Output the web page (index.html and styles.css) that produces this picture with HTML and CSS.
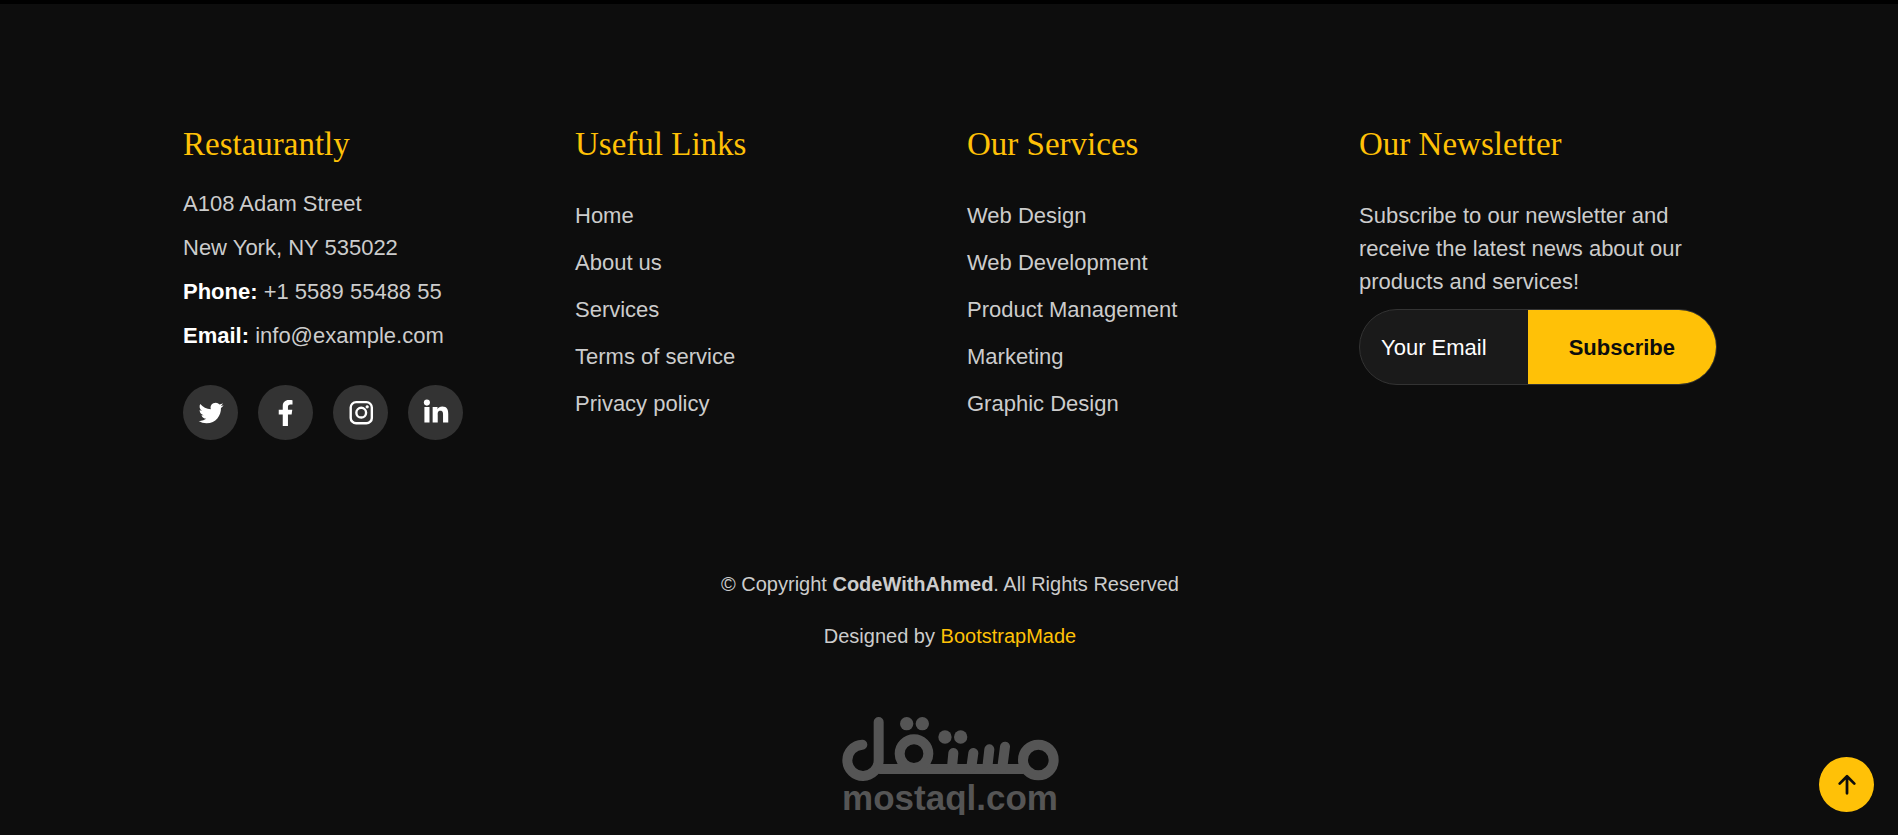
FILE: index.html
```html
<!DOCTYPE html>
<html lang="en">
<head>
    <meta charset="UTF-8">
    <meta name="viewport" content="width=device-width, initial-scale=1.0">
    <title>Restaurantly</title>
    <link rel="stylesheet" href="styles.css">
</head>
<body>

    <footer id="footer">
        <div class="container footer-top">
            <div class="footer-col">
                <h3>Restaurantly</h3>
                <address>
                    A108 Adam Street<br>
                    New York, NY 535022<br>
                    <strong>Phone:</strong> +1 5589 55488 55<br>
                    <strong>Email:</strong> info@example.com
                </address>
                <div class="social-links">
                    <a href="#" aria-label="Twitter">
                        <svg viewBox="0 0 24 24"><path d="M23.6 4.9c-.8.4-1.7.6-2.7.8 1-.6 1.7-1.5 2-2.6-.9.5-1.9.9-3 1.1a4.7 4.7 0 0 0-8.1 4.300C7.900 8.300 4.400 6.400 2.100 3.600a4.700 4.700 0 0 0 1.500 6.300c-.8 0-1.500-.2-2.100-.6v.1c0 2.300 1.600 4.200 3.800 4.600-.7.2-1.400.2-2.100.1.600 1.900 2.300 3.200 4.400 3.300A9.500 9.500 0 0 1 .6 19.300a13.400 13.400 0 0 0 7.300 2.100c8.700 0 13.500-7.200 13.300-14.100 1-.6 1.800-1.500 2.400-2.400z"/></svg>
                    </a>
                    <a href="#" aria-label="Facebook">
                        <svg viewBox="0 0 24 24"><path d="M9 24V13.400H5.300V9H9V5.800C9 2.100 11.200 0 14.600 0c1.600 0 3.400.2 3.400.2v3.900h-1.900c-1.700 0-2.300 1-2.300 2.100V9h4l-.6 4.400h-3.400V24z"/></svg>
                    </a>
                    <a href="#" aria-label="Instagram">
                        <svg viewBox="0 0 24 24" class="outline">
                            <rect x="2.500" y="2" width="19.500" height="19.500" rx="5"/>
                            <circle cx="12.200" cy="11.700" r="4.500"/>
                            <circle cx="17.700" cy="6.300" r="1" class="dot"/>
                        </svg>
                    </a>
                    <a href="#" aria-label="LinkedIn">
                        <svg viewBox="0 0 24 24"><circle cx="3.600" cy="2.400" r="2.800"/><path d="M1.300 6.500H6v14.300H1.300zM8.900 6.500h4.500v2c.7-1.300 2.300-2.400 4.400-2.400 4.600 0 5.500 3 5.500 6.800v7.900h-4.800v-7c0-1.700 0-3.900-2.400-3.900s-2.500 1.800-2.500 3.800v7.100H8.900z"/></svg>
                    </a>
                </div>
            </div>

            <div class="footer-col footer-links">
                <h3>Useful Links</h3>
                <ul>
                    <li><a href="#">Home</a></li>
                    <li><a href="#">About us</a></li>
                    <li><a href="#">Services</a></li>
                    <li><a href="#">Terms of service</a></li>
                    <li><a href="#">Privacy policy</a></li>
                </ul>
            </div>

            <div class="footer-col footer-links">
                <h3>Our Services</h3>
                <ul>
                    <li><a href="#">Web Design</a></li>
                    <li><a href="#">Web Development</a></li>
                    <li><a href="#">Product Management</a></li>
                    <li><a href="#">Marketing</a></li>
                    <li><a href="#">Graphic Design</a></li>
                </ul>
            </div>

            <div class="footer-col footer-newsletter">
                <h3>Our Newsletter</h3>
                <p>Subscribe to our newsletter and receive the latest news about our products and services!</p>
                <form>
                    <input type="email" name="email" placeholder="Your Email" aria-label="Your Email">
                    <button type="submit">Subscribe</button>
                </form>
            </div>
        </div>

        <div class="container footer-bottom">
            <p>&copy; Copyright <strong>CodeWithAhmed</strong>. All Rights Reserved</p>
            <p>Designed by <a href="#">BootstrapMade</a></p>
        </div>

        <div class="brand">
            <svg viewBox="60 54 651 192" role="img" aria-label="مستقل">
                <g class="strokes">
                    <path d="M121 137A47 47 0 1 0 170 184V69"/>
                    <path d="M173 210H602"/>
                    <circle cx="276" cy="164" r="43"/>
                    <circle cx="649" cy="183" r="46"/>
                    <path d="M394 162L390 205M454 162L448 205M502 151L496 205M549 143L541 205"/>
                </g>
                <circle cx="254" cy="74" r="20"/>
                <circle cx="301" cy="74" r="20"/>
                <circle cx="369" cy="114" r="20"/>
                <circle cx="416" cy="114" r="20"/>
            </svg>
            <span>mostaql.com</span>
        </div>
    </footer>

    <a href="#" class="back-to-top" aria-label="Back to top">
        <svg viewBox="0 0 24 24"><path d="M12 21V3M4 10.500L12 2.500 20 10.500"/></svg>
    </a>

</body>
</html>
```
FILE: styles.css
```css
* {
    box-sizing: border-box;
}

body {
    margin: 0;
    background-color: #0d0d0d;
    color: #ccc;
    font-family: "Liberation Sans", Arial, sans-serif;
    font-size: 22px;
    line-height: 33px;
}

a {
    color: #ffc107;
    text-decoration: none;
}

#footer {
    border-top: 4px solid #000;
    padding: 120px 0 0 2px;
}

.container {
    max-width: 1534px;
    margin: 0 auto;
}

.footer-top {
    display: grid;
    grid-template-columns: repeat(4, minmax(0, 1fr));
    gap: 34px;
}

h3 {
    margin: 0 0 18px;
    color: #ffc107;
    font-family: "Liberation Serif", "Times New Roman", serif;
    font-size: 33px;
    font-weight: 400;
    line-height: 40px;
}

address {
    font-style: normal;
    line-height: 44px;
}

address strong {
    color: #fff;
}

.social-links {
    display: flex;
    gap: 20px;
    margin-top: 27px;
}

.social-links a {
    display: flex;
    align-items: center;
    justify-content: center;
    width: 55px;
    height: 55px;
    border-radius: 50%;
    background-color: #333;
}

.social-links svg {
    width: 26px;
    height: 26px;
    fill: #fff;
    overflow: visible;
}

.social-links .outline {
    fill: none;
    stroke: #fff;
    stroke-width: 2.2;
}

.social-links .dot {
    fill: #fff;
    stroke-width: 1;
}

.footer-links h3,
.footer-newsletter h3 {
    margin-bottom: 35px;
}

.footer-links ul {
    margin: 0;
    padding: 0;
    list-style: none;
}

.footer-links li {
    margin-bottom: 14px;
}

.footer-links a {
    color: #ccc;
}

.footer-newsletter p {
    margin: 0 0 11px;
}

.footer-newsletter form {
    display: flex;
    height: 76px;
    border: 1px solid #333;
    border-radius: 38px;
    background-color: #1a1a1a;
    overflow: hidden;
}

.footer-newsletter input {
    flex: 1;
    min-width: 0;
    padding: 0 21px;
    border: none;
    outline: none;
    background: none;
    color: #fff;
    font: inherit;
}

.footer-newsletter input::placeholder {
    color: #fff;
    opacity: 1;
}

.footer-newsletter button {
    padding: 0 41px;
    border: none;
    background-color: #ffc107;
    color: #0d0d0d;
    font: inherit;
    font-weight: 700;
    cursor: pointer;
}

.footer-bottom {
    margin-top: 129px;
    text-align: center;
    font-size: 20px;
    line-height: 30px;
}

.footer-bottom p {
    margin: 0 0 22px;
}

.brand {
    display: flex;
    flex-direction: column;
    align-items: center;
    margin-top: 66px;
    color: #555;
    font-size: 35px;
    font-weight: 700;
    line-height: 34px;
}

.brand svg {
    width: 217px;
    height: 64px;
    fill: #555;
}

.brand .strokes {
    fill: none;
    stroke: #555;
    stroke-width: 30;
    stroke-linecap: round;
}

.back-to-top {
    position: fixed;
    right: 24px;
    bottom: 23px;
    display: flex;
    align-items: center;
    justify-content: center;
    width: 55px;
    height: 55px;
    border-radius: 50%;
    background-color: #ffc107;
}

.back-to-top svg {
    width: 22px;
    height: 22px;
    fill: none;
    stroke: #0d0d0d;
    stroke-width: 3;
    stroke-linecap: round;
    stroke-linejoin: round;
}

@media (max-width: 1580px) {
    .container {
        padding: 0 24px;
    }
}

@media (max-width: 1100px) {
    .footer-top {
        grid-template-columns: repeat(2, minmax(0, 1fr));
    }
}

@media (max-width: 640px) {
    .footer-top {
        grid-template-columns: 1fr;
    }
}
```
